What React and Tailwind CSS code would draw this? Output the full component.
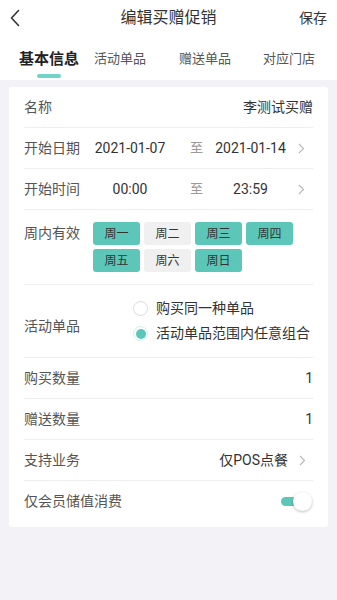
import React from "react";

const font = { fontFamily: '"Roboto","Noto Sans CJK SC","Noto Sans",sans-serif' };

function Chevron() {
  return (
    <svg width="7" height="11" viewBox="0 0 7 11" fill="none">
      <path d="M1 1l4.5 4.5L1 10" stroke="#b8b8b8" strokeWidth="1.1" />
    </svg>
  );
}

function Row({ label, children, last }) {
  return (
    <div className={`h-[41px] flex items-center ${last ? "" : "border-b border-[#eeeeee]"}`}>
      <div className="text-[14px] text-[#555555] whitespace-nowrap">{label}</div>
      <div className="flex-1 flex items-center justify-end">{children}</div>
    </div>
  );
}

function RangeRow({ label, a, b }) {
  return (
    <div className="h-[41px] flex items-center border-b border-[#eeeeee]">
      <div className="w-[70px] text-[14px] text-[#555555]">{label}</div>
      <div className="w-[72px] text-center text-[14px] text-[#333333]">{a}</div>
      <div className="ml-[24px] w-[13px] text-[13px] text-[#999999]">至</div>
      <div className="ml-[11px] w-[73px] text-center text-[14px] text-[#333333]">{b}</div>
      <div className="flex-1 flex justify-end pr-[8px]">
        <Chevron />
      </div>
    </div>
  );
}

function Chip({ on, children }) {
  return (
    <div
      className={`w-[47px] h-[23px] rounded-[3px] flex items-center justify-center text-[12px] text-[#333333] ${
        on ? "bg-[#5cc6b9]" : "bg-[#f0f0f0]"
      }`}
    >
      {children}
    </div>
  );
}

export default function App() {
  return (
    <div className="w-[337px] h-[600px] bg-[#f3f3f7] overflow-hidden" style={font}>
      {/* header */}
      <div className="h-[36px] bg-white flex items-center">
        <div className="w-[60px] pl-[9px] flex items-center">
          <svg width="12" height="18" viewBox="0 0 12 18" fill="none">
            <path d="M9.5 1.5L2.5 9l7 7.5" stroke="#333333" strokeWidth="1.6" strokeLinecap="round" strokeLinejoin="round" />
          </svg>
        </div>
        <div className="flex-1 text-center text-[16px] text-[#333333]">编辑买赠促销</div>
        <div className="w-[60px] pr-[10px] text-right text-[14px] text-[#333333]">保存</div>
      </div>
      {/* tabs */}
      <div className="h-[44px] bg-white flex items-start pt-[13px]">
        <div className="ml-[19px] flex flex-col items-center">
          <div className="text-[15px] font-bold text-[#222222] leading-[20px]">基本信息</div>
          <div className="mt-[5px] w-[24px] h-[4px] rounded-full bg-[#6fd3c7]" />
        </div>
        <div className="ml-[15px] text-[13px] text-[#555555] leading-[20px]">活动单品</div>
        <div className="ml-[33px] text-[13px] text-[#555555] leading-[20px]">赠送单品</div>
        <div className="ml-[32px] text-[13px] text-[#555555] leading-[20px]">对应门店</div>
      </div>
      {/* card */}
      <div className="mx-[9px] mt-[7px] bg-white rounded-[3px] px-[15px] pb-[5px]">
        <Row label="名称">
          <span className="text-[14px] text-[#333333]">李测试买赠</span>
        </Row>
        <RangeRow label="开始日期" a="2021-01-07" b="2021-01-14" />
        <RangeRow label="开始时间" a="00:00" b="23:59" />
        <div className="flex pt-[12px] pb-[12px] border-b border-[#eeeeee]">
          <div className="w-[69px] h-[23px] flex items-center text-[14px] text-[#555555]">周内有效</div>
          <div className="w-[205px] flex flex-wrap gap-x-[4px] gap-y-[4px]">
            <Chip on>周一</Chip>
            <Chip>周二</Chip>
            <Chip on>周三</Chip>
            <Chip on>周四</Chip>
            <Chip on>周五</Chip>
            <Chip>周六</Chip>
            <Chip on>周日</Chip>
          </div>
        </div>
        <div className="h-[73px] flex items-center border-b border-[#eeeeee]">
          <div className="w-[109px] mt-[10px] text-[14px] text-[#555555]">活动单品</div>
          <div className="flex flex-col gap-[7px]">
            <div className="flex items-center h-[18px]">
              <div className="w-[15px] h-[15px] rounded-full border border-[#dddddd] bg-white" />
              <span className="ml-[8px] text-[14px] text-[#333333]">购买同一种单品</span>
            </div>
            <div className="flex items-center h-[18px]">
              <div className="w-[15px] h-[15px] rounded-full border border-[#d5efec] bg-white flex items-center justify-center">
                <div className="w-[10px] h-[10px] rounded-full bg-[#5cc6b9]" />
              </div>
              <span className="ml-[8px] text-[14px] text-[#333333]">活动单品范围内任意组合</span>
            </div>
          </div>
        </div>
        <Row label="购买数量">
          <span className="text-[14px] text-[#333333]">1</span>
        </Row>
        <Row label="赠送数量">
          <span className="text-[14px] text-[#333333]">1</span>
        </Row>
        <Row label="支持业务">
          <span className="text-[14px] text-[#333333]">仅POS点餐</span>
          <div className="ml-[11px] mr-[7px] flex items-center">
            <Chevron />
          </div>
        </Row>
        <Row label="仅会员储值消费" last>
          <div className="relative w-[31px] h-[19px] mr-[1px]">
            <div className="absolute left-0 top-[5px] w-[22px] h-[9px] rounded-full bg-[#5cc6b9]" />
            <div className="absolute right-0 top-0 w-[19px] h-[19px] rounded-full bg-white shadow-[0_1px_3px_rgba(0,0,0,0.25)]" />
          </div>
        </Row>
      </div>
    </div>
  );
}
